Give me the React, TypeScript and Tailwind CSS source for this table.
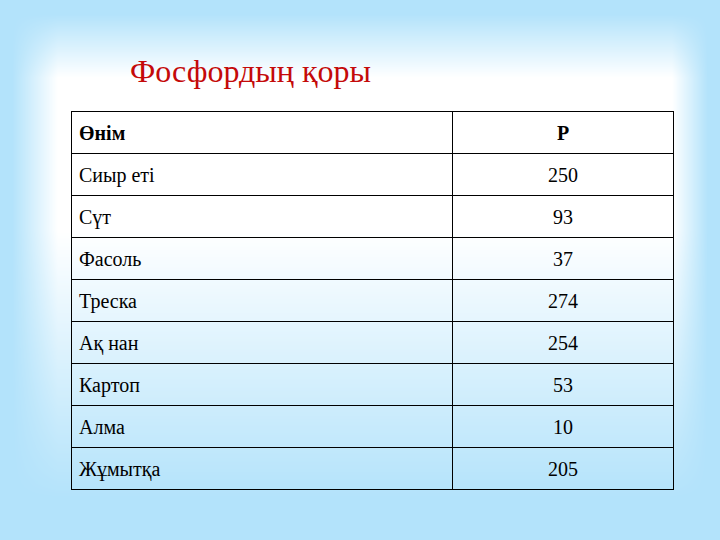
const rows: [string, string][] = [
  ['Сиыр еті', '250'],
  ['Сүт', '93'],
  ['Фасоль', '37'],
  ['Треска', '274'],
  ['Ақ нан', '254'],
  ['Картоп', '53'],
  ['Алма', '10'],
  ['Жұмытқа', '205'],
];

const serif = "[font-family:'Liberation_Serif','Times_New_Roman',serif]";
const cellCls = `border border-black h-[42px] p-0 align-middle text-[20px] text-black ${serif}`;

export default function App() {
  return (
    <div className={`relative h-[540px] w-[720px] overflow-hidden bg-[#b3e3fb] ${serif}`}>
      {/* white glow behind the slide content */}
      <div className="pointer-events-none absolute inset-0 bg-white [mask-image:linear-gradient(to_right,transparent_12px,black_58px,black_672px,transparent_708px),linear-gradient(to_bottom,transparent_14px,black_78px,black_230px,transparent_500px)] [mask-composite:intersect]" />

      <div className="relative px-[71px] pt-[55px]">
        <h1 className={`pl-[59px] text-[32px] leading-none text-[#c40a0a] ${serif}`}>Фосфордың қоры</h1>

        <table className={`mt-[24px] w-[602px] table-fixed border-collapse ${serif}`}>
          <colgroup>
            <col className="w-[381px]" />
            <col className="w-[221px]" />
          </colgroup>
          <thead>
            <tr>
              <th className={`${cellCls} pl-[7px] text-left font-bold`}>Өнім</th>
              <th className={`${cellCls} text-center font-bold`}>Р</th>
            </tr>
          </thead>
          <tbody>
            {rows.map(([name, value]) => (
              <tr key={name}>
                <td className={`${cellCls} pl-[7px] text-left`}>{name}</td>
                <td className={`${cellCls} text-center`}>{value}</td>
              </tr>
            ))}
          </tbody>
        </table>
      </div>
    </div>
  );
}
